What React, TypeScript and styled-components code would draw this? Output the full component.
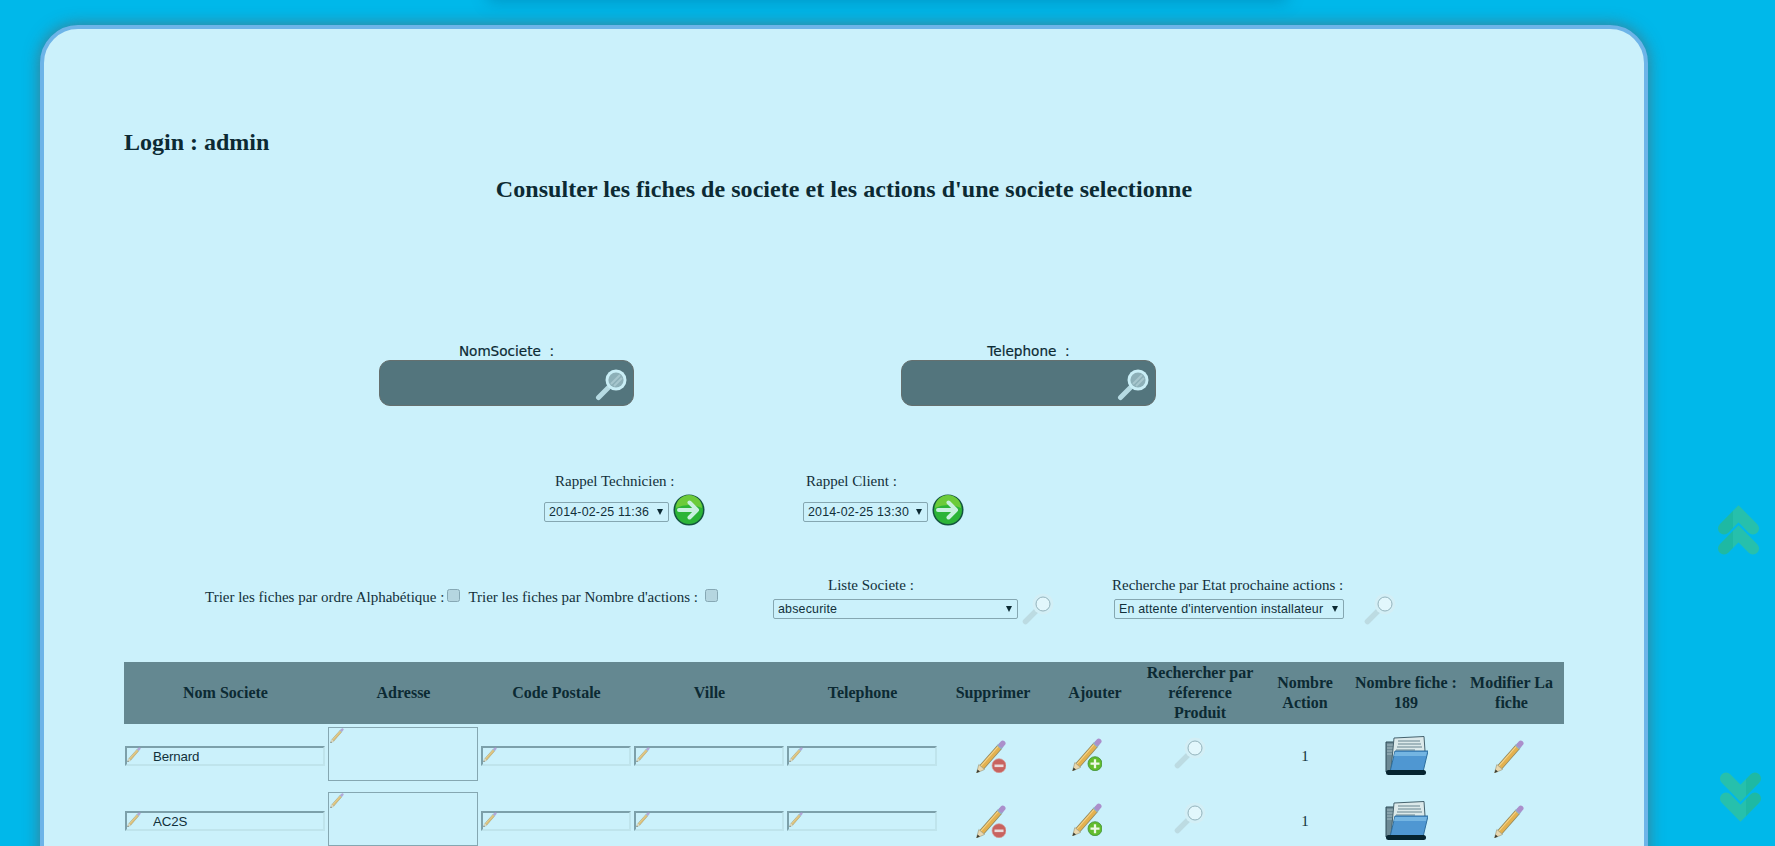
import React from "react";
import styled, { createGlobalStyle } from "styled-components";

const Global = createGlobalStyle`
  html, body { margin: 0; padding: 0; height: 846px; overflow: hidden; background: #00b8ea; }
  body { font-family: "Liberation Serif", "Times New Roman", serif; color: #0c2a33; }
  #root { height: 846px; overflow: hidden; padding-top: 25px; }
  * { box-sizing: border-box; }
`;

const TopGlow = styled.div`
  position: fixed; top: -20px; left: 490px; width: 795px; height: 20px;
  box-shadow: 0 0 16px 2px rgba(0, 90, 130, .35);
`;
const Panel = styled.main`
  margin: 0 127px 0 40px; padding: 99px 80px 40px; width: 1608px; height: 900px;
  background: #cbf1fb; border: 4px solid #6db4e8; border-radius: 38px;
  box-shadow: 0 0 15px 1px rgba(95, 95, 95, .62);
`;
const Login = styled.h2`
  margin: 0; font-size: 24px; line-height: 28px; font-weight: 700; color: #0c2a33;
`;
const Title = styled.h2`
  margin: 19px 0 0; text-align: center; font-size: 24px; line-height: 28px; font-weight: 700; letter-spacing: .05px; color: #0c2a33;
`;
const SearchRow = styled.div`
  display: flex; gap: 267px; margin-top: 140px; padding-left: 255px;
`;
const SearchField = styled.div`
  display: flex; flex-direction: column; align-items: center; width: 255px;
`;
const SearchLabel = styled.label`
  height: 17px; line-height: 16px; font-family: "DejaVu Sans", sans-serif; font-size: 13.6px; font-weight: 500;
  white-space: pre; color: #0c2a33; -webkit-text-stroke: .2px #0c2a33;
`;
const SearchBox = styled.div`
  display: flex; align-items: center; justify-content: flex-end; width: 255px; height: 46px; padding: 4px 6px 0 0;
  background: #53757d; border: 1px solid #65706f; border-radius: 11px;
`;
const RappelRow = styled.div`
  display: flex; margin-top: 66px; padding-left: 420px; gap: 98px;
`;
const RappelField = styled.div`
  display: flex; flex-direction: column; width: 161px;
`;
const FieldLabel = styled.div<{ $indent?: number }>`
  height: 18px; line-height: 18px; font-size: 15px; white-space: nowrap; color: #12303a;
  padding-left: ${(p) => p.$indent ?? 0}px;
`;
const SelectLine = styled.div`
  display: flex; align-items: flex-start; gap: 4px; margin-top: 4px;
`;
const SelectWrap = styled.div<{ $w: number; $top?: number }>`
  position: relative; width: ${(p) => p.$w}px; height: 20px; flex: none; margin-top: ${(p) => p.$top ?? 0}px;
  &::after {
    content: ""; position: absolute; right: 6px; top: 7px;
    border-left: 3.5px solid transparent; border-right: 3.5px solid transparent; border-top: 6px solid #0c2a33;
  }
`;
const Select = styled.select`
  appearance: none; display: block; width: 100%; height: 20px; padding: 0 16px 0 4px;
  background: #cbf1fb; border: 1px solid #85a7b1; border-radius: 2px;
  font-family: "Liberation Sans", Arial, sans-serif; font-size: 12.4px; letter-spacing: .2px; color: #12303a;
`;
const FilterRow = styled.div`
  display: flex; margin-top: 50px; padding-left: 81px;
`;
const SortGroup = styled.div`
  display: flex; align-items: flex-start; width: 568px; padding-top: 12px; font-size: 15px; line-height: 18px; color: #12303a;
`;
const SortLabel = styled.span<{ $gap: number }>`
  white-space: nowrap; margin-right: ${(p) => p.$gap}px;
`;
const Check = styled.input`
  appearance: none; flex: none; width: 13px; height: 13px; margin: 1px 8px 0 0;
  background: #b5d6e0; border: 1px solid #86a8b4; border-radius: 2.5px;
`;
const ListField = styled.div`
  display: flex; flex-direction: column; width: 339px;
`;
const StateField = styled.div`
  display: flex; flex-direction: column; width: 292px;
`;
const IconLine = styled.div<{ $gap: number; $left?: number }>`
  display: flex; align-items: center; gap: ${(p) => p.$gap}px; height: 32px; margin-top: -1px;
  padding-left: ${(p) => p.$left ?? 0}px;
`;
const Table = styled.table`
  table-layout: fixed; border-collapse: collapse; width: 1440px; margin-top: 37px;
`;
const Col = styled.col<{ $w: number }>`
  width: ${(p) => p.$w}px;
`;
const Th = styled.th`
  height: 62px; padding: 0; background: #648891; font-size: 16px; line-height: 20px; font-weight: 700;
  color: #0c2a33; text-align: center;
`;
const Tr = styled.tr`
  height: 65px;
`;
const InputTd = styled.td`
  padding: 22px 0 0 1px; vertical-align: top;
`;
const AddressTd = styled.td`
  padding: 3px 0 0 1px; vertical-align: top;
`;
const IconTd = styled.td`
  padding: 0; vertical-align: middle; text-align: center; font-size: 15px; color: #12303a;
`;
const IconCell = styled.div<{ $right?: number; $bottom?: number }>`
  display: flex; justify-content: center; align-items: center;
  padding: 0 ${(p) => p.$right ?? 0}px ${(p) => p.$bottom ?? 0}px 0;
`;
const FieldWrap = styled.div<{ $w: number; $h: number }>`
  position: relative; width: ${(p) => p.$w}px; height: ${(p) => p.$h}px;
`;
const TextInput = styled.input<{ $pad: number }>`
  display: block; width: 100%; height: 100%; padding: 0 0 0 ${(p) => p.$pad}px; background: transparent; outline: none;
  border-style: solid; border-width: 2px; border-color: #7ca0aa #bfe4ec #bfe4ec #7ca0aa;
  font-family: "Liberation Sans", Arial, sans-serif; font-size: 13.3px; letter-spacing: -.15px; color: #12303a;
`;
const Address = styled.textarea`
  display: block; width: 150px; height: 54px; resize: none; background: transparent; outline: none; padding: 0;
  border: 1px solid #85a7b1;
`;
const CornerPencil = styled.span`
  position: absolute; left: 2px; top: 1px; width: 14px; height: 15px; line-height: 0;
`;
const ScrollArrow = styled.div<{ $top: number; $left: number }>`
  position: fixed; top: ${(p) => p.$top}px; left: ${(p) => p.$left}px; width: 41px; height: 50px;
`;

const Mag: React.FC<{ faint?: boolean }> = ({ faint }) => (
  <svg width="32" height="32" viewBox="0 0 32 32" style={{ flex: "none" }}>
    {faint ? (
      <>
        <line x1="3.500" y1="28.500" x2="14" y2="18" stroke="#bcdbe2" strokeWidth="5.500" strokeLinecap="round" />
        <circle cx="21" cy="11" r="10.500" fill="#d3eff6" />
        <circle cx="21" cy="11" r="7" fill="#e2f7fc" stroke="#93b3bc" strokeWidth="1" />
      </>
    ) : (
      <>
        <line x1="3.500" y1="28.500" x2="14" y2="18" stroke="#b6dbe3" strokeWidth="5" strokeLinecap="round" />
        <circle cx="21" cy="11" r="10.500" fill="#c9eef6" />
        <circle cx="21" cy="11" r="7.600" fill="#8db0b8" />
        <path d="M16 15 L25 6 M19 17 L27 9" stroke="#a7c6cd" strokeWidth="2" />
      </>
    )}
  </svg>
);

const GoArrow = () => (
  <svg width="32" height="32" viewBox="0 0 32 32" style={{ flex: "none" }}>
    <circle cx="16" cy="16" r="15.500" fill="#14543f" />
    <circle cx="16" cy="16" r="14" fill="#2cb437" />
    <path d="M3 14 A13 13 0 0 1 29 14 Q16 8 3 14Z" fill="#6ccb3a" />
    <path d="M6 16 H24 M16.500 8.500 L24 16 L16.500 23.500" fill="none" stroke="#c9f0e0" strokeWidth="4" strokeLinecap="round" strokeLinejoin="round" />
  </svg>
);

const PencilShape: React.FC<{ w: number; h: number; faint?: boolean; badge?: "minus" | "plus" }> = ({ w, h, faint, badge }) => (
  <svg width={w} height={h} viewBox="0 0 30 33" opacity={faint ? 0.75 : 1} style={{ display: "block" }}>
    <line x1="6" y1="27" x2="24" y2="6.500" stroke="#8c8660" strokeWidth="6" />
    <line x1="6" y1="27" x2="24" y2="6.500" stroke="#e3b14f" strokeWidth="4.600" />
    <line x1="5" y1="26" x2="23" y2="5.500" stroke="#f3d48c" strokeWidth="1.100" />
    <path d="M0.500 33 L2.800 24.500 L8.500 29.500 Z" fill="#e9d7ae" stroke="#8a8566" strokeWidth=".5" />
    <path d="M0.500 33 L1.500 29.500 L4 31.500 Z" fill="#3c3f35" />
    <line x1="23" y1="7.500" x2="25.500" y2="4.800" stroke="#8fb0c8" strokeWidth="5.600" />
    <line x1="25.500" y1="4.800" x2="26.800" y2="3.300" stroke="#ab8fcb" strokeWidth="5.400" strokeLinecap="round" />
    {badge === "minus" && (
      <>
        <circle cx="23" cy="25.700" r="7" fill="#c8635f" stroke="#d89a94" strokeWidth=".7" />
        <rect x="18.500" y="24.500" width="9" height="2.600" fill="#eadada" />
      </>
    )}
    {badge === "plus" && (
      <>
        <circle cx="23" cy="25.700" r="7" fill="#62bc2d" stroke="#3f8f38" strokeWidth=".8" />
        <path d="M18.500 25.700 H27.500 M23 21.200 V30.200" stroke="#eef8e6" strokeWidth="2.300" />
      </>
    )}
  </svg>
);

const Folder = () => (
  <svg width="43" height="39" viewBox="0 0 43 39" style={{ display: "block" }}>
    <path d="M1 6 H13 V36 H1 Z" fill="#6d8a95" stroke="#2d4a57" strokeWidth="1" />
    <path d="M2 9 H11 M2 12 H11 M2 15 H11 M2 18 H11" stroke="#a5bbc2" strokeWidth="1" />
    <path d="M9 2 L39 0.500 L40 15 L6 34 Z" fill="#dbe9ea" stroke="#45626d" strokeWidth="1" />
    <path d="M13 5 H35 M13 8 H36 M12 11 H37 M11 14 H30" stroke="#8fa7ae" strokeWidth="1.400" />
    <path d="M10 15 H43 L38 36 H5 Z" fill="#4f97d2" stroke="#2e6f9f" strokeWidth="1" />
    <path d="M10 16 H42 L41 20 H9 Z" fill="#74b5e2" />
    <rect x="1" y="34" width="40" height="5" rx="2.500" fill="#062430" />
  </svg>
);

const Chevrons: React.FC<{ down?: boolean }> = ({ down }) => {
  const id = down ? "chevDown" : "chevUp";
  return (
    <svg width="41" height="50" viewBox="0 0 41 50" style={{ transform: down ? "scale(-1,-1)" : undefined }}>
      <defs>
        <linearGradient id={id} gradientUnits="userSpaceOnUse" x1="0" y1="0" x2="41" y2="0">
          <stop offset="0.36" stopColor="#1eb9a3" />
          <stop offset="0.36" stopColor="#26c0ac" />
        </linearGradient>
      </defs>
      {[0, 20].map((y) => (
        <g key={y} transform={`translate(0 ${y})`}>
          <path d="M6 23.500 L20.500 8.800 L35 23.500" fill="none" stroke={`url(#${id})`} strokeWidth="12" strokeLinecap="round" />
        </g>
      ))}
    </svg>
  );
};

const Text: React.FC<{ w: number; pad: number; value?: string }> = ({ w, pad, value = "" }) => (
  <FieldWrap $w={w} $h={20}>
    <TextInput $pad={pad} defaultValue={value} />
    <CornerPencil><PencilShape w={14} h={15} faint /></CornerPencil>
  </FieldWrap>
);

const widths = [203, 153, 153, 153, 153, 108, 96, 114, 96, 106, 105];
const headers = ["Nom Societe", "Adresse", "Code Postale", "Ville", "Telephone", "Supprimer", "Ajouter", "Rechercher par réference Produit", "Nombre Action", "Nombre fiche : 189", "Modifier La fiche"];
const rows = ["Bernard", "AC2S"];

export default function App() {
  return (
    <>
      <Global />
      <TopGlow />
      <Panel>
        <Login>Login : admin</Login>
        <Title>Consulter les fiches de societe et les actions d'une societe selectionne</Title>

        <SearchRow>
          {["NomSociete  :", "Telephone  :"].map((l) => (
            <SearchField key={l}>
              <SearchLabel>{l}</SearchLabel>
              <SearchBox><Mag /></SearchBox>
            </SearchField>
          ))}
        </SearchRow>

        <RappelRow>
          <RappelField>
            <FieldLabel $indent={11}>Rappel Technicien :</FieldLabel>
            <SelectLine>
              <SelectWrap $w={125} $top={8}><Select defaultValue="a"><option value="a">2014-02-25 11:36</option></Select></SelectWrap>
              <GoArrow />
            </SelectLine>
          </RappelField>
          <RappelField>
            <FieldLabel $indent={3}>Rappel Client :</FieldLabel>
            <SelectLine>
              <SelectWrap $w={125} $top={8}><Select defaultValue="a"><option value="a">2014-02-25 13:30</option></Select></SelectWrap>
              <GoArrow />
            </SelectLine>
          </RappelField>
        </RappelRow>

        <FilterRow>
          <SortGroup>
            <SortLabel $gap={3}>Trier les fiches par ordre Alphabétique :</SortLabel>
            <Check type="checkbox" />
            <SortLabel $gap={7}>Trier les fiches par Nombre d'actions :</SortLabel>
            <Check type="checkbox" />
          </SortGroup>
          <ListField>
            <FieldLabel $indent={55}>Liste Societe :</FieldLabel>
            <IconLine $gap={4}>
              <SelectWrap $w={245}><Select defaultValue="a"><option value="a">absecurite</option></Select></SelectWrap>
              <Mag faint />
            </IconLine>
          </ListField>
          <StateField>
            <FieldLabel>Recherche par Etat prochaine actions :</FieldLabel>
            <IconLine $gap={20} $left={2}>
              <SelectWrap $w={230}><Select defaultValue="a"><option value="a">En attente d'intervention installateur</option></Select></SelectWrap>
              <Mag faint />
            </IconLine>
          </StateField>
        </FilterRow>

        <Table>
          <colgroup>{widths.map((w, i) => <Col key={i} $w={w} />)}</colgroup>
          <thead>
            <tr>{headers.map((h) => <Th key={h}>{h}</Th>)}</tr>
          </thead>
          <tbody>
            {rows.map((r) => (
              <Tr key={r}>
                <InputTd><Text w={200} pad={26} value={r} /></InputTd>
                <AddressTd>
                  <FieldWrap $w={150} $h={54}>
                    <Address />
                    <CornerPencil><PencilShape w={14} h={15} faint /></CornerPencil>
                  </FieldWrap>
                </AddressTd>
                <InputTd><Text w={150} pad={4} /></InputTd>
                <InputTd><Text w={150} pad={4} /></InputTd>
                <InputTd><Text w={150} pad={4} /></InputTd>
                <IconTd><IconCell $right={4}><PencilShape w={30} h={33} badge="minus" /></IconCell></IconTd>
                <IconTd><IconCell $right={16} $bottom={5}><PencilShape w={30} h={33} badge="plus" /></IconCell></IconTd>
                <IconTd><IconCell $right={20} $bottom={8}><Mag faint /></IconCell></IconTd>
                <IconTd>1</IconTd>
                <IconTd><IconCell $bottom={2}><Folder /></IconCell></IconTd>
                <IconTd><IconCell $right={6}><PencilShape w={30} h={33} /></IconCell></IconTd>
              </Tr>
            ))}
          </tbody>
        </Table>
      </Panel>
      <ScrollArrow $top={505} $left={1718}><Chevrons /></ScrollArrow>
      <ScrollArrow $top={772} $left={1720}><Chevrons down /></ScrollArrow>
    </>
  );
}
